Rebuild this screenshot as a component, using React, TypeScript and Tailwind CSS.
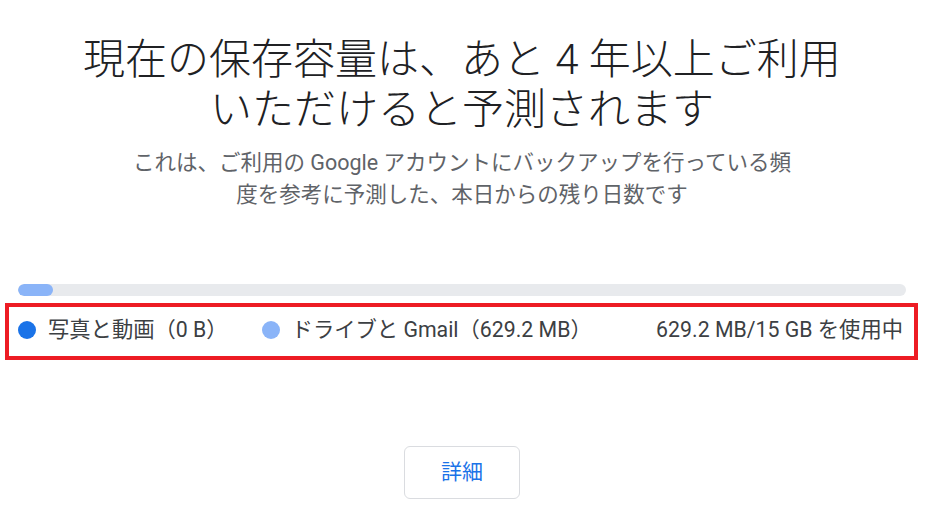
import React from "react";

export default function App() {
  return (
    <div
      className="w-[936px] h-[521px] bg-white overflow-hidden"
      style={{ fontFamily: 'Roboto, "Noto Sans CJK JP", sans-serif' }}
    >
      <div className="w-[924px] pl-[18px] pr-[18px] pt-[35px] flex flex-col">
        <h1 className="text-center text-[42px] leading-[50px] font-light text-[#202124]">
          現在の保存容量は、あと 4 年以上ご利用
          <br />
          いただけると予測されます
        </h1>
        <p className="mt-[12px] text-center text-[21.5px] leading-[32px] text-[#5f6368]">
          これは、ご利用の Google アカウントにバックアップを行っている頻
          <br />
          度を参考に予測した、本日からの残り日数です
        </p>
        <div className="mt-[73px] h-[12px] w-full rounded-full bg-[#e8eaed] overflow-hidden">
          <div className="h-full w-[35px] rounded-full bg-[#8ab4f8]" />
        </div>
        <div className="mt-[7px] ml-[-13px] mr-[-12px] border-[4px] border-[#ed1c24] h-[57px] pl-[9px] pr-[8px] pb-[3px] flex items-center text-[21.3px] text-[#3c4043]">
          <span className="w-[18px] h-[18px] rounded-full bg-[#1a73e8] shrink-0" />
          <span className="ml-[12px]">写真と動画（0 B）</span>
          <span className="ml-[34px] w-[18px] h-[18px] rounded-full bg-[#8ab4f8] shrink-0" />
          <span className="ml-[12px]">ドライブと Gmail（629.2 MB）</span>
          <span className="ml-auto pr-[3px]">629.2 MB/15 GB を使用中</span>
        </div>
        <div className="mt-[86px] flex justify-center">
          <button className="w-[116px] h-[53px] rounded-[6px] border border-[#dadce0] bg-white text-[21px] text-[#1a73e8]">
            詳細
          </button>
        </div>
      </div>
    </div>
  );
}
